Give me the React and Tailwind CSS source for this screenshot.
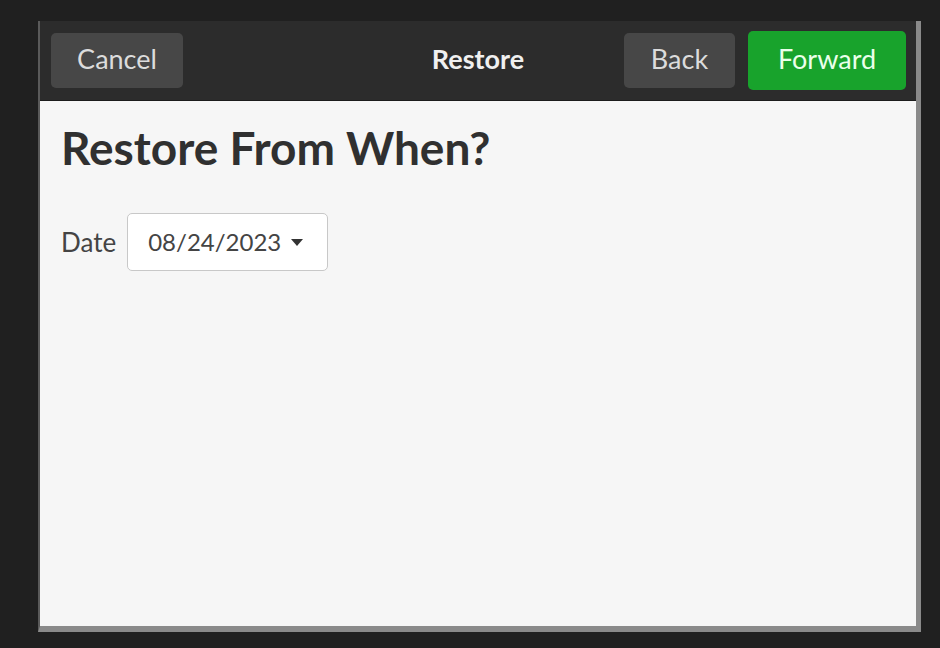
export default function App() {
  return (
    <div
      className="w-[940px] h-[648px] bg-[#202020] pt-[21px] pl-[38px]"
      style={{ fontFamily: 'Lato, "Open Sans", sans-serif' }}
    >
      <div className="w-[883px] h-[611px] flex flex-col border-r-[5px] border-b-[6px] border-[#8a8a8a] border-l-[2px] border-l-[#5a5a5a]">
        {/* header bar */}
        <div className="relative h-[80px] shrink-0 bg-[#2c2c2c] border-b border-[#1c1c1c] flex items-center pl-[11px] pr-[10px]">
          <button className="h-[55px] w-[132px] rounded-[5px] bg-[#474747] text-[#dcdcdc] text-[27px] pb-[3px]">
            Cancel
          </button>
          <div className="absolute left-0 right-0 top-0 bottom-0 flex items-center justify-center pointer-events-none pb-[3px]">
            <span className="text-[#f0f0f0] font-bold text-[27px]">Restore</span>
          </div>
          <div className="ml-auto flex items-center gap-[13px]">
            <button className="h-[55px] w-[111px] rounded-[5px] bg-[#474747] text-[#dcdcdc] text-[27px] pb-[3px]">
              Back
            </button>
            <button className="h-[59px] w-[158px] rounded-[5px] bg-[#18a32c] text-[#eaffea] text-[27px] pb-[3px]">
              Forward
            </button>
          </div>
        </div>

        {/* body */}
        <div className="flex-1 bg-[#f6f6f6] pl-[21px] pt-[18px]">
          <h1 className="text-[46px] font-bold text-[#303030] leading-[58px]">Restore From When?</h1>
          <div className="mt-[36px] flex items-center gap-[11px]">
            <span className="text-[26px] text-[#444]">Date</span>
            <button className="h-[58px] w-[201px] rounded-[5px] border border-[#c8c8c8] bg-white flex items-center pl-[20px] gap-[10px] text-[24px] text-[#444]">
              <span>08/24/2023</span>
              <svg width="12" height="7" viewBox="0 0 12 7">
                <path d="M0 0h12L6 7z" fill="#333" />
              </svg>
            </button>
          </div>
        </div>
      </div>
    </div>
  )
}
